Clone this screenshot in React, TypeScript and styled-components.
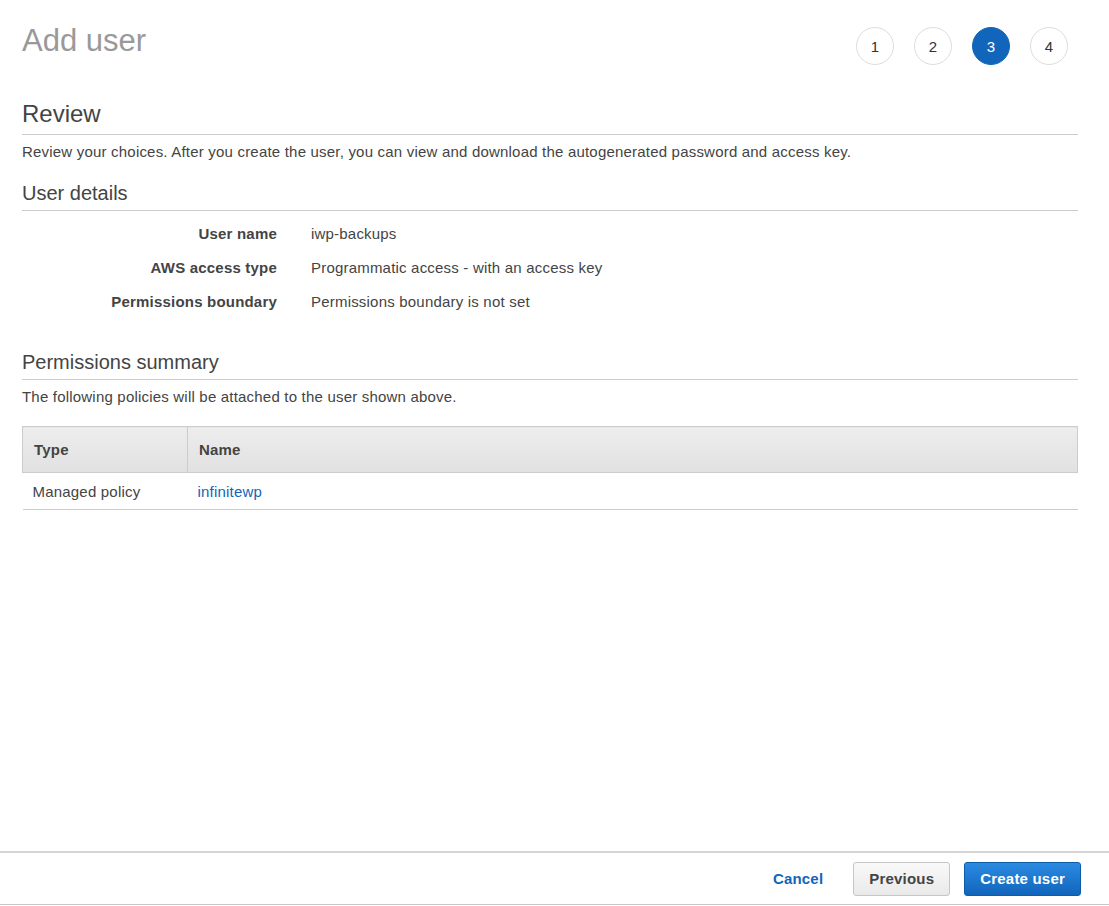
import React from "react"
import styled, { createGlobalStyle } from "styled-components"

const GlobalStyle = createGlobalStyle`
  html, body {
    margin: 0;
    padding: 0;
    background: #fff;
    font-family: "Liberation Sans", Arial, sans-serif;
    color: #444;
    font-size: 15px;
    letter-spacing: 0.2px;
  }
`

const Page = styled.div`
  display: flex;
  flex-direction: column;
  min-height: 906px;
`

const Main = styled.main`
  flex: 1;
  padding: 0 31px 0 22px;
`

const Header = styled.div`
  display: flex;
  justify-content: space-between;
  align-items: flex-start;
  padding-top: 22px;
  height: 69px;
`

const Title = styled.h1`
  margin: 2px 0 0;
  font-size: 31px;
  font-weight: normal;
  letter-spacing: 0;
  color: #999;
  line-height: 34px;
`

const Steps = styled.ol`
  display: flex;
  gap: 20px;
  list-style: none;
  margin: 5px 10px 0 0;
  padding: 0;
`

const Step = styled.li<{ $active?: boolean }>`
  width: 38px;
  height: 38px;
  box-sizing: border-box;
  border-radius: 50%;
  display: flex;
  align-items: center;
  justify-content: center;
  font-size: 15px;
  letter-spacing: 0;
  color: ${(p) => (p.$active ? "#fff" : "#333")};
  background: ${(p) => (p.$active ? "#1166bb" : "#fff")};
  border: 1px solid ${(p) => (p.$active ? "#1166bb" : "#ddd")};
`

const SectionTitle = styled.h2<{ $size: number }>`
  margin: 0;
  font-size: ${(p) => p.$size}px;
  font-weight: normal;
  letter-spacing: 0;
  color: #444;
  padding-bottom: ${(p) => (p.$size > 20 ? 6 : 5)}px;
  border-bottom: 1px solid #ccc;
`

const Text = styled.p`
  margin: 7px 0 0;
  line-height: 20px;
`

const Details = styled.dl`
  display: grid;
  grid-template-columns: 255px 1fr;
  column-gap: 34px;
  row-gap: 14px;
  margin: 13px 0 0;
`

const Label = styled.dt`
  font-weight: bold;
  text-align: right;
  line-height: 20px;
`

const Value = styled.dd`
  margin: 0;
  line-height: 20px;
`

const Section = styled.section<{ $top: number }>`
  margin-top: ${(p) => p.$top}px;
`

const Table = styled.table`
  width: 100%;
  border-collapse: collapse;
  margin-top: 19px;
`

const Th = styled.th<{ $w?: number }>`
  text-align: left;
  font-weight: bold;
  color: #444;
  height: 45px;
  padding: 0 11px;
  width: ${(p) => (p.$w ? `${p.$w}px` : "auto")};
  background: linear-gradient(#ededed, #e1e1e1);
  border: 1px solid #ccc;
`

const Td = styled.td`
  height: 36px;
  padding: 0 10px;
  border-bottom: 1px solid #ccc;
`

const Link = styled.a`
  color: #1166bb;
  text-decoration: none;
`

const Footer = styled.footer`
  display: flex;
  justify-content: flex-end;
  align-items: center;
  gap: 14px;
  height: 51px;
  padding-right: 28px;
  border-top: 2px solid #d4d4d4;
  border-bottom: 1px solid #c8c8c8;
  margin-bottom: 1px;
`

const CancelLink = styled.a`
  color: #1166bb;
  font-weight: bold;
  text-decoration: none;
  margin-right: 16px;
`

const Button = styled.button<{ $primary?: boolean }>`
  font-family: inherit;
  font-size: 15px;
  letter-spacing: 0.2px;
  font-weight: bold;
  height: 34px;
  padding: 0 15px;
  border-radius: 3px;
  cursor: pointer;
  color: ${(p) => (p.$primary ? "#fff" : "#444")};
  background: ${(p) =>
    p.$primary
      ? "linear-gradient(#2b8ae2, #1166bb)"
      : "linear-gradient(#f9f9f9, #e9e9e9)"};
  border: 1px solid ${(p) => (p.$primary ? "#0d5ca8" : "#c6c6c6")};
`

const details = [
  { label: "User name", value: "iwp-backups" },
  { label: "AWS access type", value: "Programmatic access - with an access key" },
  { label: "Permissions boundary", value: "Permissions boundary is not set" },
]

export default function App(): React.JSX.Element {
  return (
    <Page>
      <GlobalStyle />
      <Main>
        <Header>
          <Title>Add user</Title>
          <Steps>
            {[1, 2, 3, 4].map((n) => (
              <Step key={n} $active={n === 3}>
                {n}
              </Step>
            ))}
          </Steps>
        </Header>

        <Section $top={9}>
          <SectionTitle $size={24}>Review</SectionTitle>
          <Text>
            Review your choices. After you create the user, you can view and download the
            autogenerated password and access key.
          </Text>
        </Section>

        <Section $top={20}>
          <SectionTitle $size={20}>User details</SectionTitle>
          <Details>
            {details.map((d) => (
              <React.Fragment key={d.label}>
                <Label>{d.label}</Label>
                <Value>{d.value}</Value>
              </React.Fragment>
            ))}
          </Details>
        </Section>

        <Section $top={39}>
          <SectionTitle $size={20}>Permissions summary</SectionTitle>
          <Text>The following policies will be attached to the user shown above.</Text>
          <Table>
            <thead>
              <tr>
                <Th $w={142}>Type</Th>
                <Th>Name</Th>
              </tr>
            </thead>
            <tbody>
              <tr>
                <Td>Managed policy</Td>
                <Td>
                  <Link href="#">infinitewp</Link>
                </Td>
              </tr>
            </tbody>
          </Table>
        </Section>
      </Main>

      <Footer>
        <CancelLink href="#">Cancel</CancelLink>
        <Button>Previous</Button>
        <Button $primary>Create user</Button>
      </Footer>
    </Page>
  )
}
